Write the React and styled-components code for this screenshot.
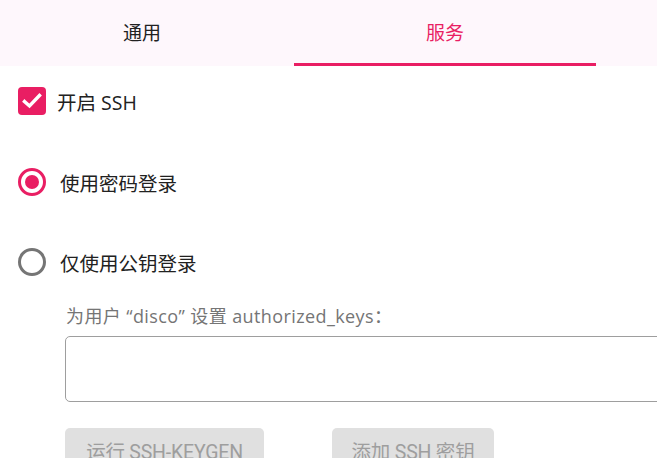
import React, { useState } from 'react';
import styled, { createGlobalStyle } from 'styled-components';

const PINK = '#e91e63';

const GlobalStyle = createGlobalStyle`
  html, body {
    margin: 0;
    padding: 0;
    background: #ffffff;
    overflow: hidden;
  }
  body {
    font-family: "Open Sans", "Noto Sans CJK SC", sans-serif;
    color: #212121;
  }
`;

const Page = styled.div`
  width: 657px;
  height: 458px;
  overflow: hidden;
`;

const TabBar = styled.div`
  display: grid;
  grid-template-columns: 284px 302px;
  column-gap: 10px;
  height: 66px;
  background: #fef7fc;
`;

const Tab = styled.div`
  display: flex;
  align-items: center;
  justify-content: center;
  font-size: 19px;
  color: ${(p) => (p.$active ? PINK : '#212121')};
  border-bottom: 3px solid ${(p) => (p.$active ? PINK : 'transparent')};
  cursor: pointer;
`;

const Body = styled.div`
  padding-left: 18px;
`;

const OptionRow = styled.label`
  display: flex;
  align-items: center;
  height: ${(p) => p.$h}px;
  margin-top: ${(p) => p.$top || 0}px;
  font-size: 19.5px;
  cursor: pointer;
`;

const CheckBox = styled.span`
  width: 28px;
  height: 28px;
  border-radius: 4px;
  background: ${PINK};
  display: flex;
  align-items: center;
  justify-content: center;
  margin-right: 11px;
`;

const Radio = styled.span`
  width: 28px;
  height: 28px;
  box-sizing: border-box;
  border-radius: 50%;
  border: 3px solid ${(p) => (p.$on ? PINK : '#757575')};
  display: flex;
  align-items: center;
  justify-content: center;
  margin-right: 14px;
  &::after {
    content: '';
    width: 14px;
    height: 14px;
    border-radius: 50%;
    background: ${(p) => (p.$on ? PINK : 'transparent')};
  }
`;

const KeySection = styled.div`
  padding-left: 47px;
`;

const KeyLabel = styled.div`
  font-size: 18px;
  letter-spacing: 0.4px;
  color: #757575;
  height: 22px;
  line-height: 22px;
  margin-top: 3px;
  margin-left: 1px;
  white-space: nowrap;
`;

const KeyInput = styled.textarea`
  display: block;
  box-sizing: border-box;
  width: 640px;
  height: 66px;
  margin-top: 9px;
  border: 1.5px solid #9e9e9e;
  border-radius: 5px;
  resize: none;
  outline: none;
  font-family: "Liberation Mono", monospace;
`;

const Buttons = styled.div`
  display: flex;
  gap: 68px;
  margin-top: 26px;
`;

const Button = styled.button`
  width: ${(p) => p.$w}px;
  height: 40px;
  border: none;
  border-radius: 5px;
  background: #e0e0e0;
  color: #9e9e9e;
  font-family: Roboto, "Noto Sans CJK SC", sans-serif;
  font-size: 19.5px;
  letter-spacing: -0.2px;
  padding: 0;
  padding-top: 4px;
`;

export default function App() {
  const [tab, setTab] = useState(1);
  const [mode, setMode] = useState('password');

  return (
    <Page>
      <GlobalStyle />
      <TabBar>
        <Tab $active={tab === 0} onClick={() => setTab(0)}>通用</Tab>
        <Tab $active={tab === 1} onClick={() => setTab(1)}>服务</Tab>
      </TabBar>
      <Body>
        <OptionRow $h={70}>
          <CheckBox>
            <svg width="20" height="16" viewBox="0 0 20 16">
              <path d="M2.5 8.5 L7.5 13 L17.5 2.5" fill="none" stroke="#fff" strokeWidth="3.4" strokeLinecap="square" />
            </svg>
          </CheckBox>
          开启 SSH
        </OptionRow>
        <OptionRow $h={80} $top={6} onClick={() => setMode('password')}>
          <Radio $on={mode === 'password'} />
          使用密码登录
        </OptionRow>
        <OptionRow $h={80} onClick={() => setMode('key')}>
          <Radio $on={mode === 'key'} />
          仅使用公钥登录
        </OptionRow>
        <KeySection>
          <KeyLabel>为用户 “disco” 设置 authorized_keys：</KeyLabel>
          <KeyInput />
          <Buttons>
            <Button $w={199}>运行 SSH-KEYGEN</Button>
            <Button $w={162}>添加 SSH 密钥</Button>
          </Buttons>
        </KeySection>
      </Body>
    </Page>
  );
}
